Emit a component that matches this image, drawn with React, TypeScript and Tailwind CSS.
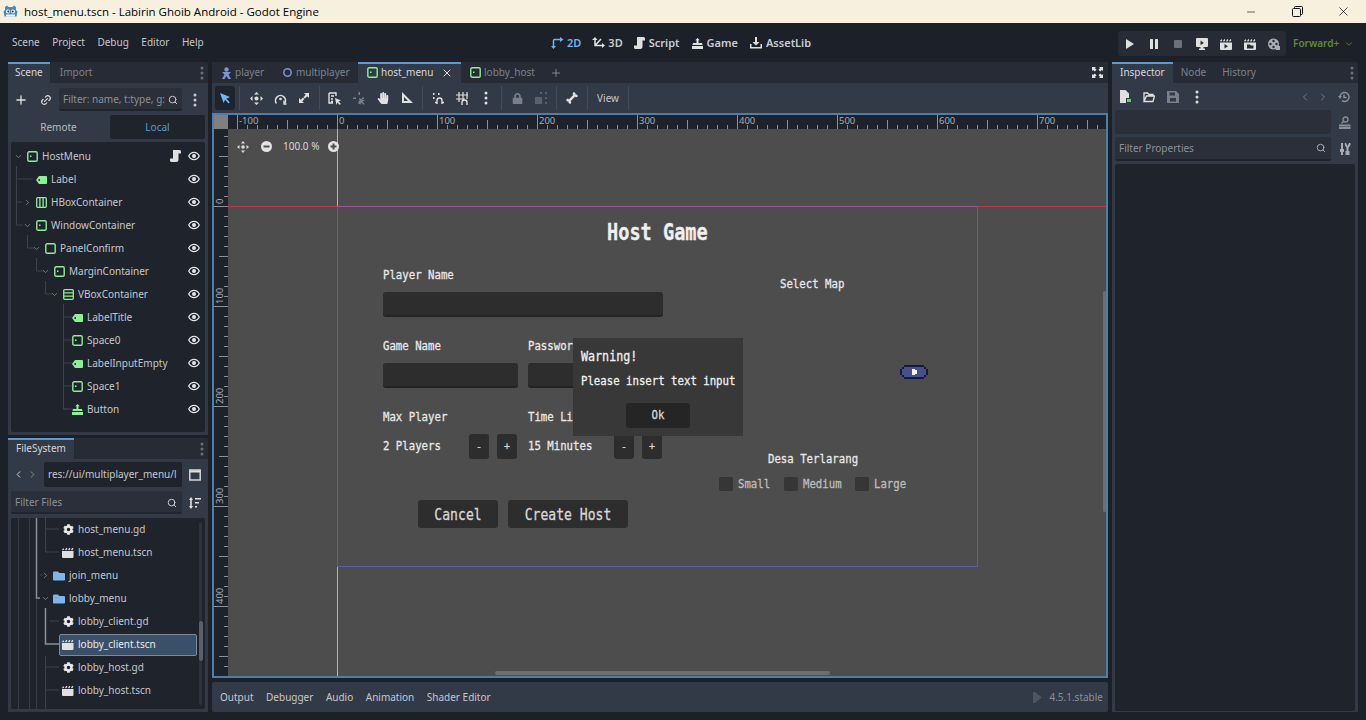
import React from "react";
import { Plus, Search, Link2, ChevronDown, ChevronRight, ChevronLeft, X, Minus } from "lucide-react";
import { FaCog, FaFolder, FaHandPaper, FaLock, FaBone } from "react-icons/fa";

const G = "#8eef97";
const W = "#e0e0e0";

const Dots = ({ c = "#c8cad0" }: { c?: string }) => (
  <svg width="4" height="14" viewBox="0 0 4 14"><circle cx="2" cy="2" r="1.5" fill={c} /><circle cx="2" cy="7" r="1.5" fill={c} /><circle cx="2" cy="12" r="1.5" fill={c} /></svg>
);
const Eye = () => (
  <svg width="12" height="12" viewBox="0 0 12 12"><path d="M.7 6C2 3.6 3.9 2.4 6 2.4S10 3.6 11.3 6C10 8.4 8.1 9.6 6 9.6S2 8.4.7 6Z" fill="none" stroke="#e4e6ea" strokeWidth="1.3" /><circle cx="6" cy="6" r="2" fill="#e4e6ea" /></svg>
);
const Ctrl = ({ dot = true, s = 11 }: { dot?: boolean; s?: number }) => (
  <svg width={s} height={s} viewBox="0 0 11 11"><rect x=".8" y=".8" width="9.4" height="9.4" rx="1.3" fill="none" stroke={G} strokeWidth="1.4" />{dot && <rect x="3" y="4.5" width="1.5" height="1.5" fill={G} />}</svg>
);
const Tag = () => (
  <svg width="11" height="8" viewBox="0 0 11 8"><path d="M3 0H10a1 1 0 0 1 1 1V7a1 1 0 0 1-1 1H3L0 4Z" fill={G} /><circle cx="3.2" cy="4" r=".9" fill="#1e232c" /></svg>
);
const HBox = () => (
  <svg width="11" height="11" viewBox="0 0 11 11"><rect x=".7" y=".7" width="9.6" height="9.6" rx="1" fill="none" stroke={G} strokeWidth="1.3" /><path d="M3.9 1V10M7.1 1V10" stroke={G} strokeWidth="1.3" /></svg>
);
const VBox = () => (
  <svg width="11" height="11" viewBox="0 0 11 11"><rect x=".7" y=".7" width="9.6" height="9.6" rx="1" fill="none" stroke={G} strokeWidth="1.3" /><path d="M1 3.9H10M1 7.1H10" stroke={G} strokeWidth="1.3" /></svg>
);
const Btn = ({ c = G }: { c?: string }) => (
  <svg width="11" height="11" viewBox="0 0 11 11"><path d="M5.5 0 7.8 2.3H6.5V5H10L10.6 7H.4L1 5H4.5V2.3H3.2ZM0 8H11V11H0Z" fill={c} /></svg>
);
const Scroll = ({ c = "#e0e0e0" }: { c?: string }) => (
  <svg width="11" height="12" viewBox="0 0 11 12"><path d="M3 0H9.5A1.5 1.5 0 0 1 11 1.5V3.5H8.5V9.5A2.5 2.5 0 0 1 6 12H1.5A1.5 1.5 0 0 1 0 10.5V8.5H3Z" fill={c} /></svg>
);
const Clap = ({ c = W }: { c?: string }) => (
  <svg width="12" height="11" viewBox="0 0 12 11"><path d="M0 4H11.5V9.8A1.2 1.2 0 0 1 10.3 11H1.2A1.2 1.2 0 0 1 0 9.8Z" fill={c} /><path d="M.5 3 1.8 1.7M3.5 3 5 1.3M6.5 3 8 1.3M9.5 3 11 1.3" stroke={c} strokeWidth="1.3" /></svg>
);
const Gear = () => <FaCog size={11} color="#e8e8e8" />;
const Folder = () => <FaFolder size={12} color="#7fb5e8" />;

const Arrow = ({ c = "#72b8f5" }: { c?: string }) => (
  <svg width="12" height="12" viewBox="0 0 12 12"><path d="M1 1 11 5 7.3 6.7 10.8 10.2 9.6 11.4 6 7.8 4.6 11Z" fill={c} /></svg>
);
const MoveI = () => (
  <svg width="13" height="13" viewBox="0 0 13 13" fill={W}><path d="M6.5 0 9 2.5H4ZM6.5 13 4 10.5H9ZM0 6.5 2.5 4V9ZM13 6.5 10.5 9V4Z" /><circle cx="6.5" cy="6.5" r="2" /></svg>
);
const RotI = () => (
  <svg width="13" height="13" viewBox="0 0 13 13" fill="none" stroke={W} strokeWidth="1.6"><path d="M2.5 11.5A5 5 0 1 1 10.5 11.5" /><circle cx="6.5" cy="7" r="1.3" fill={W} stroke="none" /><path d="M10 8.5v3.5h2.5" strokeWidth="1.4" /></svg>
);
const ScaleI = () => (
  <svg width="12" height="12" viewBox="0 0 12 12" fill={W}><path d="M6 1H11V6L9.2 4.2 7 6.5 5.5 5 7.8 2.8ZM1 6V11H6L4.2 9.2 6.5 7 5 5.5 2.8 7.8Z" /></svg>
);
const ListSel = () => (
  <svg width="14" height="13" viewBox="0 0 14 13" fill="none" stroke={W} strokeWidth="1.4"><path d="M1 1H8V4M1 1V11H5M3 4H6M3 7H5M3 9.5H5" /><path d="M7 6 13 8.5 10.5 9.5 13 12 11.5 12.8 9.5 10.5 8.5 13Z" fill={W} stroke="none" /></svg>
);
const Pivot = () => (
  <svg width="13" height="13" viewBox="0 0 13 13" fill="#7a808a"><path d="M5.5 0H7V3H5.5ZM0 5.5H3V7H0ZM9 5.5H11V7H9ZM5.5 9H7V12H5.5Z" /><path d="M6 6 12 8.5 9.5 9.5 11.5 12 10.5 12.8 8.5 10.5 7.5 13Z" /></svg>
);
const RulerI = () => (
  <svg width="12" height="12" viewBox="0 0 12 12"><path d="M1 0V11H12ZM3 5V9H7Z" fill={W} fillRule="evenodd" /></svg>
);
const Snap = () => (
  <svg width="13" height="13" viewBox="0 0 13 13" fill="none" stroke={W} strokeWidth="1.4"><path d="M5 12V8.5A2.5 2.5 0 0 1 10 8.5V12M5 10.5H3M10 10.5H12" /><path d="M1 2H2.5M6 2H7.5M1 6H2.5" strokeWidth="1.8" /></svg>
);
const GridI = () => (
  <svg width="13" height="13" viewBox="0 0 13 13" fill="none" stroke={W} strokeWidth="1.2"><path d="M3 0V10M7 0V8M0 3H12M0 7H9M11 0V7" /><path d="M6 13V10.5A2 2 0 0 1 11 10.5V13" strokeWidth="1.4" /></svg>
);
const Group = () => (
  <svg width="12" height="12" viewBox="0 0 12 12" fill="#5a606b"><path d="M0 5H7V12H0Z" /><path d="M5 0H7V2H5ZM10 0H12V2H10ZM10 5H12V7H10ZM10 10H12V12H10Z" /></svg>
);
const Corner2D = () => (
  <svg width="13" height="12" viewBox="0 0 13 12" fill="none" stroke="#6eb4f0" strokeWidth="1.5"><path d="M2.5 9.5V3.5Q2.5 2.5 3.5 2.5H9.5" /><path d="M9 0 12.5 2.5 9 5ZM0 9H5L2.5 12Z" fill="#6eb4f0" stroke="none" /></svg>
);
const Corner3D = () => (
  <svg width="13" height="12" viewBox="0 0 13 12" fill="none" stroke={W} strokeWidth="1.5"><path d="M3 2V8.5H10M3 8.5 9 2" /><path d="M0 3 3 0 5.5 3ZM10 6 13 8.5 10 11Z" fill={W} stroke="none" /></svg>
);
const Asset = () => (
  <svg width="12" height="12" viewBox="0 0 12 12" fill={W}><path d="M5 0H7V5H9.5L6 8.5 2.5 5H5Z" /><path d="M0 7H1.5V10H10.5V7H12V11.5H0Z" /></svg>
);
const Monitor = () => (
  <svg width="12" height="12" viewBox="0 0 12 12" fill={W}><path d="M1 0H11a1 1 0 0 1 1 1V8a1 1 0 0 1-1 1H7.5V10.5H9V12H3V10.5H4.5V9H1a1 1 0 0 1-1-1V1a1 1 0 0 1 1-1Z" /><path d="M4.5 2.5 8 5 4.5 7Z" fill="#262b35" /></svg>
);
const ClapPlay = () => (
  <svg width="12" height="12" viewBox="0 0 12 12"><path d="M0 4.5H12V11a1 1 0 0 1-1 1H1a1 1 0 0 1-1-1Z" fill={W} /><path d="M.5 3.3 2 1.8M3.5 3.3 5 1.5M6.5 3.3 8 1.5M9.5 3.3 11 1.5" stroke={W} strokeWidth="1.3" /><path d="M4.5 6 8 8.2 4.5 10.5Z" fill="#262b35" /></svg>
);
const ClapFold = () => (
  <svg width="12" height="12" viewBox="0 0 12 12"><path d="M0 4.5H12V11a1 1 0 0 1-1 1H1a1 1 0 0 1-1-1Z" fill={W} /><path d="M.5 3.3 2 1.8M3.5 3.3 5 1.5M6.5 3.3 8 1.5M9.5 3.3 11 1.5" stroke={W} strokeWidth="1.3" /><path d="M3 6.5H6L7 7.5H9.5V10.5H3Z" fill="#262b35" /></svg>
);
const Film = () => (
  <svg width="12" height="12" viewBox="0 0 12 12"><circle cx="5.5" cy="6" r="5.5" fill="#a9adb5" /><circle cx="5.5" cy="3" r="1.2" fill="#262b35" /><circle cx="5.5" cy="9" r="1.2" fill="#262b35" /><circle cx="2.5" cy="6" r="1.2" fill="#262b35" /><circle cx="8.5" cy="6" r="1.2" fill="#262b35" /><rect x="8" y="8" width="4" height="4" fill="#a9adb5" /></svg>
);

const Tab = ({ children, active }: { children: React.ReactNode; active?: boolean }) => (
  <div className={`flex items-center h-[21px] pb-[2px] border-t-2 text-[10px] ${active ? "bg-[#333a47] border-[#5b9bd5] text-[#d4d6da]" : "border-transparent text-[#7d828c]"}`}>{children}</div>
);

const Txt = ({ children, cls }: { children: React.ReactNode; cls: string }) => (
  <div className={`absolute whitespace-pre font-['DejaVu_Sans_Mono',monospace] [-webkit-text-stroke:0.25px_currentColor] scale-y-[1.22] leading-none ${cls}`}>{children}</div>
);

const sceneRows: [string, number, "down" | "right" | "none", React.ReactNode][] = [
  ["HostMenu", 0, "down", <Ctrl />],
  ["Label", 1, "none", <Tag />],
  ["HBoxContainer", 1, "right", <HBox />],
  ["WindowContainer", 1, "down", <Ctrl />],
  ["PanelConfirm", 2, "down", <Ctrl dot={false} />],
  ["MarginContainer", 3, "down", <Ctrl />],
  ["VBoxContainer", 4, "down", <VBox />],
  ["LabelTitle", 5, "none", <Tag />],
  ["Space0", 5, "none", <Ctrl />],
  ["LabelInputEmpty", 5, "none", <Tag />],
  ["Space1", 5, "none", <Ctrl />],
  ["Button", 5, "none", <Btn />],
];

const fileRows: [string, number, React.ReactNode, boolean?, ("right" | "down")?][] = [
  ["host_menu.gd", 0, <Gear />],
  ["host_menu.tscn", 0, <Clap />],
  ["join_menu", -1, <Folder />, false, "right"],
  ["lobby_menu", -1, <Folder />, false, "down"],
  ["lobby_client.gd", 0, <Gear />],
  ["lobby_client.tscn", 0, <Clap />, true],
  ["lobby_host.gd", 0, <Gear />],
  ["lobby_host.tscn", 0, <Clap />],
];

const tools: (React.ReactNode | "sep")[] = [
  <MoveI />, <RotI />, <ScaleI />, "sep", <ListSel />, <Pivot />, <FaHandPaper size={12} color={W} />, <RulerI />, "sep",
  <Snap />, <GridI />, <Dots c={W} />, "sep", <FaLock size={11} color="#7a808a" />, <Group />, "sep", <FaBone size={12} color={W} className="-rotate-45" />, "sep",
];

const HRuler = () => {
  const t: React.ReactNode[] = [];
  for (let x = 9.5; x < 878; x += 10) {
    const u = Math.round((x - 109.5) / 10);
    const m = ((u % 10) + 10) % 10;
    const y1 = m === 0 ? 0 : m === 5 ? 5 : 10;
    t.push(<path key={x} d={`M${x} ${y1}V14`} stroke="#8c9099" />);
  }
  return (
    <svg width="878" height="14">
      {t}
      {[-100, 0, 100, 200, 300, 400, 500, 600, 700].map((n) => (
        <text key={n} x={n + 111} y="9" fontSize="9.5" fill="#a8abb2" fontFamily="Noto Sans">{n}</text>
      ))}
    </svg>
  );
};
const VRuler = () => {
  const t: React.ReactNode[] = [];
  for (let y = 7.5; y < 547; y += 10) {
    const u = Math.round((y - 77.5) / 10);
    const m = ((u % 10) + 10) % 10;
    const x1 = m === 0 ? 0 : m === 5 ? 5 : 10;
    t.push(<path key={y} d={`M${x1} ${y}H14`} stroke="#8c9099" />);
  }
  return (
    <svg width="14" height="547">
      {t}
      {[0, 100, 200, 300, 400].map((n) => (
        <text key={n} transform={`translate(9 ${n + 75}) rotate(-90)`} fontSize="9.5" fill="#a8abb2" fontFamily="Noto Sans">{n}</text>
      ))}
    </svg>
  );
};

const BtnCls = "font-['DejaVu_Sans_Mono',monospace] [-webkit-text-stroke:0.25px_currentColor] text-[#d8d8d8]";
const Label = "text-[10.7px] text-[#e8e8e8]";

const Canvas = () => (
  <div className="relative flex-1 bg-[#4d4d4d] overflow-hidden">
    <svg className="absolute left-0 top-0" width="878" height="547">
      <path d="M0 77.5H878" stroke="#c8324a" />
      <path d="M109.5 0V547" stroke="#a9bba0" />
      <rect x="109.5" y="77.5" width="640" height="360" fill="none" stroke="#5c5cb0" />
      <path d="M109.5 77.5H749.5" stroke="#a44c9c" />
    </svg>

    <div className="absolute left-[9px] top-[10px] flex items-center">
      <svg width="12" height="12" viewBox="0 0 12 12" fill="#dcdcdc"><path d="M6 0 8 2.5H4ZM6 12 4 9.5H8ZM0 6 2.5 4V8ZM12 6 9.5 8V4Z" /><circle cx="6" cy="6" r="1.8" /></svg>
      <svg className="ml-[12px]" width="11" height="11" viewBox="0 0 11 11"><circle cx="5.5" cy="5.5" r="5.5" fill="#e4e4e4" /><rect x="2.5" y="4.5" width="6" height="2" fill="#4d4d4d" /></svg>
      <span className="ml-[11px] w-[45px] font-['Noto_Sans',sans-serif] text-[10px] text-[#d8d8d8]">100.0 %</span>
      <svg width="11" height="11" viewBox="0 0 11 11"><circle cx="5.5" cy="5.5" r="5.5" fill="#e4e4e4" /><path d="M2.5 4.5H4.5V2.5H6.5V4.5H8.5V6.5H6.5V8.5H4.5V6.5H2.5Z" fill="#4d4d4d" /></svg>
    </div>

    <Txt cls="left-[379px] top-[95px] text-[18.6px] font-bold text-[#f0f0f0]">Host Game</Txt>
    <Txt cls={`left-[155px] top-[141px] ${Label}`}>Player Name</Txt>
    <div className="absolute left-[155px] top-[163px] w-[280px] h-[25px] rounded-[3px] bg-[#2d2d2d] border-b-2 border-[#232323]" />

    <Txt cls={`left-[155px] top-[212px] ${Label}`}>Game Name</Txt>
    <Txt cls={`left-[300px] top-[212px] ${Label}`}>Password</Txt>
    <div className="absolute left-[155px] top-[234px] w-[135px] h-[25px] rounded-[3px] bg-[#2d2d2d] border-b-2 border-[#232323]" />
    <div className="absolute left-[300px] top-[234px] w-[135px] h-[25px] rounded-[3px] bg-[#2d2d2d] border-b-2 border-[#232323]" />

    <Txt cls={`left-[155px] top-[283px] ${Label}`}>Max Player</Txt>
    <Txt cls={`left-[300px] top-[283px] ${Label}`}>Time Limit</Txt>
    <Txt cls={`left-[155px] top-[312px] ${Label}`}>2 Players</Txt>
    <Txt cls={`left-[300px] top-[312px] ${Label}`}>15 Minutes</Txt>
    {[
      ["left-[241px]", "-"],
      ["left-[269px]", "+"],
      ["left-[386px]", "-"],
      ["left-[414px]", "+"],
    ].map(([l, s]) => (
      <div key={l} className={`absolute ${l} top-[305px] w-[20px] h-[25px] rounded-[3px] bg-[#2d2d2d] flex items-center justify-center text-[10px] ${BtnCls}`}>{s}</div>
    ))}

    <div className={`absolute left-[190px] top-[371px] w-[80px] h-[28px] rounded-[3px] bg-[#2d2d2d] flex items-center justify-center text-[13.1px] ${BtnCls}`}><span className="scale-y-[1.22] pt-[1px]">Cancel</span></div>
    <div className={`absolute left-[280px] top-[371px] w-[120px] h-[28px] rounded-[3px] bg-[#2d2d2d] flex items-center justify-center text-[13.1px] ${BtnCls}`}><span className="scale-y-[1.22] pt-[1px]">Create Host</span></div>

    <Txt cls={`left-[552px] top-[150px] ${Label}`}>Select Map</Txt>
    <svg className="absolute left-[672px] top-[236px]" width="28" height="14" viewBox="0 0 28 14" shapeRendering="crispEdges">
      <path d="M4 0H24V2H26V4H28V10H26V12H24V14H4V12H2V10H0V4H2V2H4Z" fill="#141a3a" />
      <path d="M4 2H24V4H26V10H24V12H4V10H2V4H4Z" fill="#46508c" />
      <path d="M12 4H15V5H17V9H15V10H12Z" fill="#f4f4e0" />
    </svg>

    <Txt cls={`left-[540px] top-[325px] ${Label}`}>Desa Terlarang</Txt>
    <div className="absolute left-[491px] top-[348px] w-[14px] h-[14px] rounded-[2px] bg-[#363636]" />
    <Txt cls="left-[510px] top-[350px] text-[10.7px] text-[#bdbdbd]">Small</Txt>
    <div className="absolute left-[556px] top-[348px] w-[14px] h-[14px] rounded-[2px] bg-[#363636]" />
    <Txt cls="left-[575px] top-[350px] text-[10.7px] text-[#bdbdbd]">Medium</Txt>
    <div className="absolute left-[627px] top-[348px] w-[14px] h-[14px] rounded-[2px] bg-[#363636]" />
    <Txt cls="left-[646px] top-[350px] text-[10.7px] text-[#bdbdbd]">Large</Txt>

    <div className="absolute left-[345px] top-[209px] w-[170px] h-[98px] bg-[#383838]">
      <Txt cls="left-[8px] top-[13px] text-[11.7px] text-[#f0f0f0]">Warning!</Txt>
      <Txt cls="left-[8px] top-[38px] text-[10.7px] text-[#f0f0f0]">Please insert text input</Txt>
      <div className={`absolute left-[53px] top-[65px] w-[64px] h-[25px] rounded-[3px] bg-[#252525] flex items-center justify-center text-[10.7px] ${BtnCls}`}><span className="scale-y-[1.22]">Ok</span></div>
    </div>

    <div className="absolute left-[267px] top-[542px] w-[335px] h-[4px] rounded-full bg-[#6e6e6e]" />
    <div className="absolute left-[875px] top-[162px] w-[3px] h-[221px] rounded-full bg-[#6e6e6e]" />
  </div>
);

const SceneTree = () => (
  <div className="relative flex-1 mx-[3px] mb-[3px] mt-[3px] bg-[#1e232c] rounded-[2px] pt-[3px] overflow-hidden">
    <svg className="absolute left-0 top-0" width="195" height="290" fill="none" stroke="#3c424e">
      <path d="M5.5 24V83H12M5.5 37H22M5.5 60H11M16.5 93V106H24M25.5 116V129H33M34.5 139V152H41M52.5 162V267H57M52.5 175H66M52.5 198H66M52.5 221H66M52.5 244H66M52.5 267H66" />
    </svg>
    {sceneRows.map(([name, lvl, arrow, icon], i) => (
      <div key={name} className="relative flex items-center h-[23px]">
        <div className={`flex items-center ${["pl-[1px]", "pl-[10px]", "pl-[19px]", "pl-[28px]", "pl-[37px]", "pl-[46px]"][lvl]}`}>
          <span className="w-[13px] flex justify-center">
            {arrow === "down" && <ChevronDown size={9} strokeWidth={2} color="#8b8f98" />}
            {arrow === "right" && <ChevronRight size={9} strokeWidth={2} color="#8b8f98" />}
          </span>
          <span className="w-[15px] flex justify-center">{icon}</span>
          <span className="ml-[2px] text-[10px] text-[#c4c7cc]">{name}</span>
        </div>
        <div className="absolute right-[5px] top-[5px] flex items-center gap-[7px]">
          {i === 0 && <Scroll />}
          <Eye />
        </div>
      </div>
    ))}
  </div>
);

const FileTree = () => (
  <div className="relative flex-1 mx-[3px] mb-[3px] mt-[3px] bg-[#1e232c] rounded-[2px] pt-0 overflow-hidden">
    <svg className="absolute left-0 top-0" width="160" height="192" fill="none">
      <path d="M7.5 0V192M18.5 0V192M25.5 0V192" stroke="#353b47" />
      <path d="M25.5 0V80H29" stroke="#8b8f98" strokeWidth="1.5" />
      <path d="M34.5 0V34H48M34.5 11H48" stroke="#3c424e" />
      <path d="M34.5 90V126H48" stroke="#8b8f98" strokeWidth="1.5" />
      <path d="M38.5 103H48M34.5 138V192M34.5 149H48M34.5 172H48" stroke="#3c424e" />
      <path d="M29 57H32" stroke="#3c424e" />
    </svg>
    <div>
      {fileRows.map(([name, lvl, icon, sel, arrow]) => (
        <div key={name} className={`relative flex items-center h-[23px] ${lvl === 0 ? "pl-[50px]" : "pl-[30px]"}`}>
          {sel && <div className="absolute left-[48px] top-[1px] w-[138px] h-[22px] bg-[#3a5068] border border-[#7b8a99] rounded-[2px]" />}
          {arrow && (
            <span className="relative w-[9px] flex justify-center mr-[2px]">
              {arrow === "right" ? <ChevronRight size={9} strokeWidth={2} color="#8b8f98" /> : <ChevronDown size={9} strokeWidth={2} color="#8b8f98" />}
            </span>
          )}
          <span className="relative w-[14px] flex justify-center">{icon}</span>
          <span className={`relative ml-[3px] text-[10px] ${sel ? "text-[#e8eaee]" : "text-[#c4c7cc]"}`}>{name}</span>
        </div>
      ))}
    </div>
    <div className="absolute right-[3px] top-[4px] w-[3px] h-[183px] bg-[#2c313c] rounded-full" />
    <div className="absolute right-[2px] top-[103px] w-[4px] h-[40px] bg-[#5a606b] rounded-full" />
  </div>
);

export default function App() {
  return (
    <div className="w-[1366px] h-[720px] overflow-hidden flex flex-col bg-[#1c2029] font-['Noto_Sans',sans-serif]">
      <div className="h-[23px] shrink-0 bg-[#f7f0df] flex items-center pl-[3px] text-black relative">
        <svg width="15" height="15" viewBox="0 0 15 15"><path d="M2 3 4 1.5 5.5 3H9.5L11 1.5 13 3V6L14.5 7.5 13.5 12.5H1.5L.5 7.5 2 6Z" fill="#478cbf" /><circle cx="5" cy="7.5" r="2" fill="#fff" /><circle cx="10" cy="7.5" r="2" fill="#fff" /><circle cx="5.3" cy="7.5" r="1" fill="#333" /><circle cx="9.7" cy="7.5" r="1" fill="#333" /><path d="M3 12.5V10.5H12V12.5Z" fill="#fff" /></svg>
        <span className="ml-[6px] text-[11.5px] font-['Open_Sans',sans-serif]">host_menu.tscn - Labirin Ghoib Android - Godot Engine</span>
        <div className="ml-auto flex items-center">
          <span className="w-[46px] flex justify-center"><Minus size={12} strokeWidth={1.2} /></span>
          <span className="w-[46px] flex justify-center">
            <svg width="11" height="11" viewBox="0 0 11 11" fill="none" stroke="#111"><rect x=".5" y="2.5" width="8" height="8" rx="1" /><path d="M2.5 2.5V1.5a1 1 0 0 1 1-1h6a1 1 0 0 1 1 1v6a1 1 0 0 1-1 1h-1" /></svg>
          </span>
          <span className="w-[46px] flex justify-center"><X size={15} strokeWidth={1.1} /></span>
        </div>
      </div>

      <div className="h-[39px] shrink-0 relative flex items-center text-[10px] text-[#c4c7cc] pl-[12px]">
        <div className="flex gap-[12.5px]"><span>Scene</span><span>Project</span><span>Debug</span><span>Editor</span><span>Help</span></div>
        <div className="absolute left-[551px] top-[12px] flex items-center gap-[11px] text-[11px] font-semibold text-[#c9ccd1]">
          <span className="flex items-center gap-[3px] text-[#6eb4f0]"><Corner2D />2D</span>
          <span className="flex items-center gap-[3px]"><Corner3D />3D</span>
          <span className="flex items-center gap-[4px]"><Scroll c={W} />Script</span>
          <span className="flex items-center gap-[4px] ml-[1px]"><Btn c={W} />Game</span>
          <span className="flex items-center gap-[4px] ml-[1px]"><Asset />AssetLib</span>
        </div>
        <div className="absolute left-[1118px] top-[8px] w-[168px] h-[25px] rounded-[3px] bg-[#262b35] flex items-center">
          {[
            <svg width="12" height="12" viewBox="0 0 12 12"><path d="M2 1 10 6 2 11Z" fill={W} /></svg>,
            <svg width="12" height="12" viewBox="0 0 12 12" fill={W}><rect x="2" y="1" width="3" height="10" rx=".5" /><rect x="7" y="1" width="3" height="10" rx=".5" /></svg>,
            <svg width="12" height="12" viewBox="0 0 12 12"><rect x="2" y="2" width="8" height="8" rx="1" fill="#6b707a" /></svg>,
            <Monitor />, <ClapPlay />, <ClapFold />, <Film />,
          ].map((ic, i) => (
            <span key={i} className="w-[24px] flex justify-center">{ic}</span>
          ))}
        </div>
        <div className="absolute left-[1293px] top-[13px] flex items-center gap-[5px] text-[10px] font-semibold text-[#5b8c38]">
          Forward+<ChevronDown size={10} strokeWidth={2} />
        </div>
      </div>

      <div className="flex-1 flex pl-[8px] pr-[8px] pb-[8px] gap-[4px] min-h-0">
        <div className="w-[200px] shrink-0 flex flex-col gap-[3px]">
          <div className="h-[373px] flex flex-col bg-[#262b36] rounded-[2px]">
            <div className="flex items-center justify-between pr-[4px] shrink-0">
              <div className="flex">
                <Tab active><span className="px-[7px]">Scene</span></Tab>
                <Tab><span className="px-[10px]">Import</span></Tab>
              </div>
              <Dots c="#6a6f79" />
            </div>
            <div className="bg-[#333a47] flex-1 flex flex-col min-h-0">
              <div className="flex items-center h-[32px] shrink-0 pt-[1px]">
                <span className="w-[25px] pl-[1px] flex justify-center"><Plus size={14} strokeWidth={2.2} color={W} /></span>
                <span className="w-[25px] flex justify-center"><Link2 size={12} strokeWidth={2.2} color={W} className="-rotate-45" /></span>
                <div className="w-[123px] h-[23px] ml-[1px] pt-[2px] rounded-[2px] bg-[#2a2f3a] border-b-2 border-[#20242d] flex items-center px-[4px] justify-between text-[10px] text-[#8b8f98]">
                  <span className="whitespace-nowrap">Filter: name, t:type, g:</span>
                  <Search size={10} strokeWidth={2.4} color="#c8cad0" />
                </div>
                <span className="ml-[11px]"><Dots /></span>
              </div>
              <div className="flex mx-[3px] h-[24px] shrink-0 text-[10px]">
                <div className="w-[99px] pr-[4px] flex items-center justify-center text-[#b6b9bf]">Remote</div>
                <div className="flex-1 bg-[#1e232c] rounded-[2px] flex items-center justify-center text-[#5b9bd5]">Local</div>
              </div>
              <SceneTree />
            </div>
          </div>
          <div className="flex-1 flex flex-col bg-[#262b36] rounded-[2px] min-h-0">
            <div className="flex items-center justify-between pr-[4px] shrink-0">
              <Tab active><span className="px-[8px]">FileSystem</span></Tab>
              <Dots c="#6a6f79" />
            </div>
            <div className="bg-[#333a47] flex-1 flex flex-col min-h-0">
              <div className="flex items-center h-[31px] shrink-0 pl-[5px]">
                <ChevronLeft size={11} strokeWidth={2} color={W} />
                <ChevronRight size={11} strokeWidth={2} color="#8b8f98" className="ml-[3px]" />
                <div className="ml-[6px] w-[138px] h-[25px] rounded-[2px] bg-[#1e232c] flex items-center pl-[4px] text-[10px] text-[#c4c7cc] whitespace-nowrap">res://ui/multiplayer_menu/l</div>
                <svg className="ml-[7px]" width="12" height="12" viewBox="0 0 12 12" fill="none" stroke={W} strokeWidth="1.4"><rect x=".8" y="1" width="10.4" height="10" /><path d="M1 2.5H11" strokeWidth="2" /></svg>
              </div>
              <div className="flex items-center h-[25px] shrink-0 pl-[3px]">
                <div className="w-[171px] h-[23px] pt-[2px] rounded-[2px] bg-[#2a2f3a] border-b-2 border-[#20242d] flex items-center justify-between px-[4px] text-[10px] text-[#8b8f98]">
                  <span>Filter Files</span>
                  <Search size={10} strokeWidth={2.4} color="#c8cad0" className="mr-[1px]" />
                </div>
                <svg className="ml-[7px]" width="12" height="12" viewBox="0 0 12 12" fill={W}><path d="M2 0 4 3H2.8V9H4L2 12 0 9H1.2V3H0ZM6 1H12V2.5H6ZM6 5H10V6.5H6ZM6 9H8V10.5H6Z" /></svg>
              </div>
              <FileTree />
            </div>
          </div>
        </div>

        <div className="flex-1 flex flex-col min-w-0">
          <div className="h-[21px] shrink-0 flex items-center bg-[#262b36] relative">
            <Tab><span className="w-[61px] pl-[9px] flex items-center gap-[3px]"><svg width="11" height="12" viewBox="0 0 11 12" fill="#7f93d8"><circle cx="5.5" cy="2.5" r="2.2" /><path d="M1 5H10L7.5 7.5 10 12H7.5L5.5 9 3.5 12H1L3.5 7.5Z" /></svg>player</span></Tab>
            <Tab><span className="w-[85px] pl-[9px] flex items-center gap-[3px]"><svg width="11" height="11" viewBox="0 0 11 11"><circle cx="5.5" cy="5.5" r="3.7" fill="none" stroke="#7f93d8" strokeWidth="1.5" /></svg>multiplayer</span></Tab>
            <Tab active><span className="w-[103px] pl-[9px] flex items-center gap-[3px]"><Ctrl />host_menu<X size={12} strokeWidth={2} color={W} className="ml-[5px]" /></span></Tab>
            <Tab><span className="pl-[9px] flex items-center gap-[3px]"><Ctrl />lobby_host</span></Tab>
            <Plus size={12} strokeWidth={1.8} color="#8b8f98" className="ml-[15px]" />
            <svg className="ml-auto mr-[5px]" width="11" height="11" viewBox="0 0 11 11" fill={W}><path d="M0 0H4L2.9 1.1 4.5 2.8 2.8 4.5 1.1 2.9 0 4ZM11 0V4L9.9 2.9 8.2 4.5 6.5 2.8 8.1 1.1 7 0ZM0 11V7L1.1 8.1 2.8 6.5 4.5 8.2 2.9 9.9 4 11ZM11 11H7L8.1 9.9 6.5 8.2 8.2 6.5 9.9 8.1 11 7Z" /></svg>
          </div>
          <div className="h-[30px] shrink-0 bg-[#333a47] flex items-center pl-[3px]">
            <span className="w-[20px] h-[24px] rounded-[3px] bg-[#1e232c] flex items-center justify-center"><Arrow /></span>
            <span className="w-[5px] flex justify-center"><span className="w-px h-[24px] bg-[#454c59] ml-[3px]" /></span>
            <span className="w-[4px]" />
            {tools.map((t, i) =>
              t === "sep" ? (
                <span key={i} className="w-[7px] flex justify-center"><span className="w-px h-[24px] bg-[#454c59]" /></span>
              ) : (
                <span key={i} className="w-[24px] flex justify-center">{t}</span>
              )
            )}
            <span className="w-[34px] text-center text-[10px] text-[#c4c7cc]">View</span>
            <span className="w-px h-[24px] bg-[#454c59] ml-[3px]" />
          </div>
          <div className="h-[565px] shrink-0 border-2 border-[#4f7ea8] flex flex-col bg-[#1e232b]">
            <div className="flex h-[14px] shrink-0">
              <div className="w-[14px] h-[14px] bg-[#808080]" />
              <HRuler />
            </div>
            <div className="flex flex-1 min-h-0">
              <VRuler />
              <Canvas />
            </div>
          </div>
          <div className="mt-[4px] flex-1 bg-[#333a47] rounded-[2px] flex items-center pl-[8px] pt-[1px] gap-[12.5px] text-[10px] text-[#c4c7cc]">
            <span>Output</span><span>Debugger</span><span>Audio</span><span>Animation</span><span>Shader Editor</span>
            <span className="ml-auto mr-[5px] flex items-center gap-[7px] text-[#8b8f98]">
              <svg width="9" height="11" viewBox="0 0 9 11" fill="#4f5560"><path d="M2 0 9 5.5 2 11H0V0Z" /></svg>
              4.5.1.stable
            </span>
          </div>
        </div>

        <div className="w-[246px] shrink-0 flex flex-col bg-[#262b36] rounded-[2px]">
          <div className="flex items-center justify-between pr-[4px] shrink-0">
            <div className="flex">
              <Tab active><span className="px-[8px]">Inspector</span></Tab>
              <Tab><span className="px-[8px]">Node</span></Tab>
              <Tab><span className="px-[8px]">History</span></Tab>
            </div>
            <Dots c="#6a6f79" />
          </div>
          <div className="bg-[#333a47] flex-1 flex flex-col min-h-0">
            <div className="flex items-center h-[27px] shrink-0 pl-[7px]">
              <svg width="12" height="13" viewBox="0 0 12 13"><path d="M1 0H6.5L10 3.5V8H7V13H1Z" fill={W} /><path d="M8 9H12V12H8Z" fill="#5fd35f" /></svg>
              <svg className="ml-[12px]" width="12" height="12" viewBox="0 0 12 12" fill="none" stroke={W} strokeWidth="1.3"><path d="M1 10.5V2H4.5L6 3.5H10V5M1 10.5H10L11.5 5H3.5Z" /></svg>
              <svg className="ml-[12px]" width="12" height="12" viewBox="0 0 12 12" fill="#7a808a"><path d="M0 0H9L12 3V12H0ZM2.5 1.5V4.5H8V1.5ZM3 7V10.5H9V7Z" fillRule="evenodd" /></svg>
              <span className="ml-[16px]"><Dots c={W} /></span>
              <ChevronLeft size={12} strokeWidth={1.5} color="#8b8f98" className="ml-[100px]" />
              <ChevronRight size={12} strokeWidth={1.5} color="#8b8f98" className="ml-[6px]" />
              <svg className="ml-[9px]" width="12" height="12" viewBox="0 0 12 12" fill="none" stroke="#8b8f98" strokeWidth="1.4"><path d="M2 6A4.5 4.5 0 1 1 4 9.7M6 3.5V6.5H8.5" /><path d="M0 5H4L2 8Z" fill="#8b8f98" stroke="none" /></svg>
            </div>
            <div className="flex items-center h-[24px] shrink-0 pl-[3px]">
              <div className="w-[216px] h-[24px] rounded-[2px] bg-[#2a2f3a]" />
              <svg className="ml-[7px]" width="13" height="13" viewBox="0 0 13 13" fill="none" stroke="#8b8f98" strokeWidth="1.3"><circle cx="7.5" cy="3.5" r="2.5" /><path d="M5.5 5.5 3.5 7.5" /><path d="M1 9.5H12.5M1 12H12.5" strokeWidth="2" /></svg>
            </div>
            <div className="flex items-center h-[24px] mt-[3px] shrink-0 pl-[3px]">
              <div className="w-[216px] h-[24px] rounded-[2px] bg-[#2a2f3a] border-b-2 border-[#20242d] flex items-center justify-between px-[4px] text-[10px] text-[#8b8f98]">
                <span>Filter Properties</span>
                <Search size={10} strokeWidth={2.4} color="#a8abb2" className="mr-[1px]" />
              </div>
              <svg className="ml-[8px]" width="12" height="12" viewBox="0 0 12 12" fill="#a8abb2"><path d="M2 0H4V6H5V9H4V12H2V9H1V6H2ZM7 0 8.5 3 10 0H11.5V2L9.5 5V8H10.5V12H6.5V8H7.5V5L5.8 2V0Z" /></svg>
            </div>
            <div className="flex-1 mx-[3px] mt-[3px] mb-[1px] bg-[#1e232c] rounded-[2px]" />
          </div>
        </div>
      </div>
    </div>
  );
}
